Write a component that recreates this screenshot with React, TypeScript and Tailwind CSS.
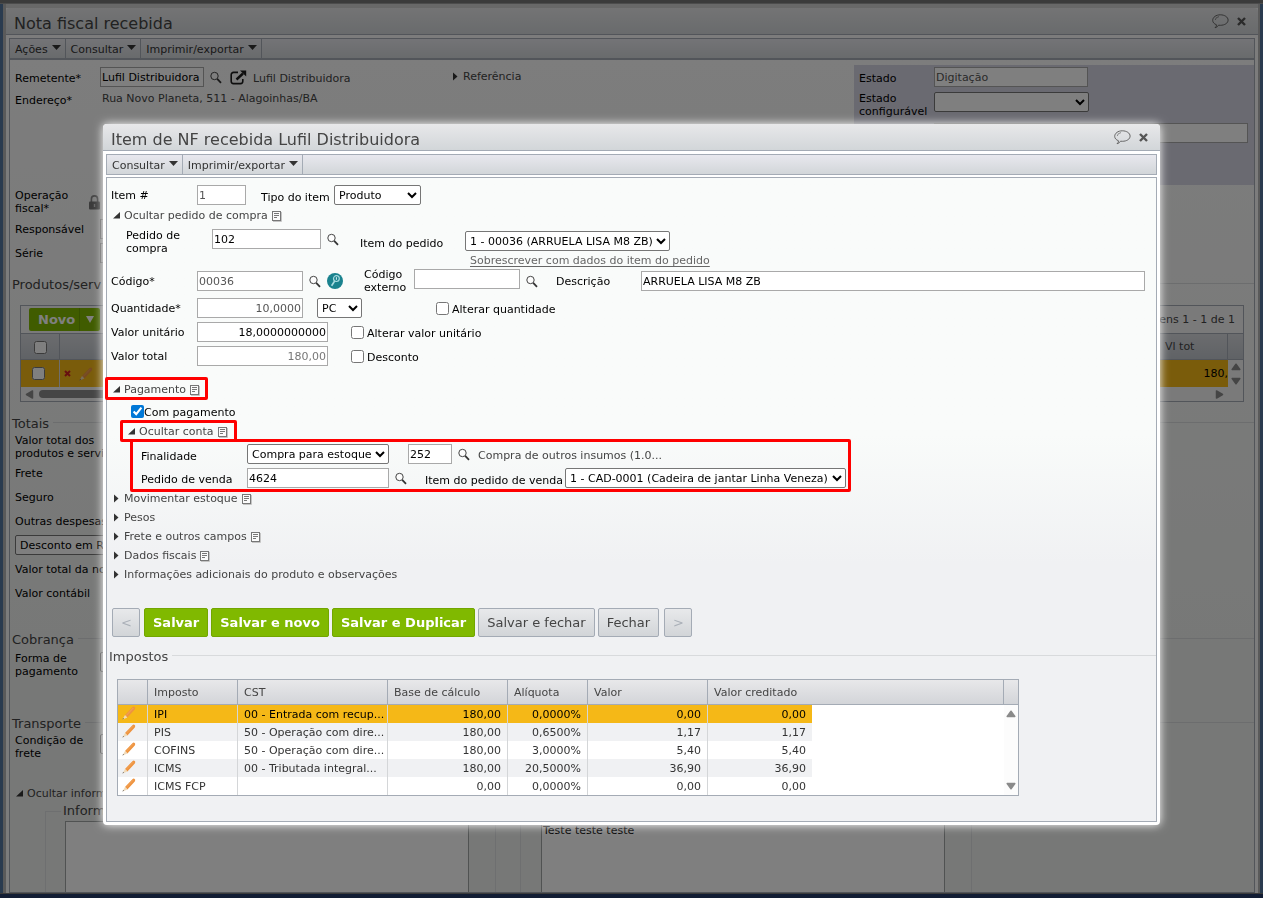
import type { ReactNode } from "react";

const inputBase = "h-5 border border-[#a9a9a9] bg-white px-px text-[11px]";
const selectBase = "h-5 rounded-xs border border-[#767676] bg-white px-0 text-[11px] text-black";

function SearchIcon() {
  return (
    <svg width="12" height="13" viewBox="0 0 12 13" fill="none">
      <circle cx="4.5" cy="5" r="3.7" fill="#fdfdfd" stroke="#444" />
      <path d="M7.200 7.800l3.800 4" stroke="#333" strokeWidth="1.8" />
    </svg>
  );
}

function SearchButton({ label }: { label: string }) {
  return (
    <button type="button" aria-label={label} className="ml-1.5 shrink-0">
      <SearchIcon />
    </button>
  );
}

function NoteIcon() {
  return (
    <svg width="10" height="11" viewBox="0 0 10 11" fill="none" className="mt-0.5 ml-1 shrink-0">
      <rect x="0.5" y="0.5" width="8" height="9" fill="#fbfbfb" stroke="#777" />
      <path d="M2 2.5h5M2 4.5h5M2 6.5h3" stroke="#777" />
      <path d="M9.5 1v9.5H1" stroke="#c4c4c4" />
    </svg>
  );
}

function PencilIcon() {
  return (
    <svg width="14" height="14" viewBox="0 0 14 14">
      <path d="M3 9L10.4 1.200q1.200-1.100 2.300-.2t.1 2.400L5.400 11.400z" fill="#ee9440" />
      <path d="M4 9.700L11.300 2" stroke="#f5ab63" strokeWidth="0.700" />
      <path d="M3 9L5.400 11.400L.5 13.500z" fill="#f0dab8" />
      <path d="M1.200 12L2 12.800L.4 13.600z" fill="#555" />
    </svg>
  );
}

function LockIcon() {
  return (
    <svg width="11" height="15" viewBox="0 0 11 15">
      <path d="M2.4 7V4a3.1 3.1 0 016.2 0v3" fill="none" stroke="#8a8a8a" strokeWidth="1.6" />
      <rect y="6.5" width="11" height="8" rx="1" fill="#777" />
      <path d="M5.5 9v3" stroke="#ccc" strokeWidth="1.4" />
    </svg>
  );
}

function OpenIcon() {
  return (
    <svg width="17" height="15" viewBox="0 0 17 15" fill="none" stroke="#1c1c1c">
      <path
        d="M8 2.4H3.5a2.3 2.3 0 00-2.3 2.3v6.6a2.3 2.3 0 002.3 2.3h7a2.3 2.3 0 002.3-2.3V9"
        strokeWidth="1.6"
      />
      <path d="M6.5 9.5L13 3.5" strokeWidth="2.4" />
      <path d="M10 .5h6.2v6z" fill="#1c1c1c" stroke="none" />
    </svg>
  );
}

function WindowButtons() {
  return (
    <div className="flex items-center gap-2">
      <button type="button" aria-label="Comentários">
        <svg width="17" height="15" viewBox="0 0 17 15" fill="none" stroke="#666">
          <path d="M4.5 10.8C2 9.800.7 8.300.7 6.300.7 3.300 4 .8 8.300.8s7.800 2.300 7.800 5.300-3.400 5.200-7.800 5.200l-1.800-.1Q5.700 13 3 13.800q1.600-1.400 1.500-3z" />
          <path d="M3.200 6Q3.500 3.200 7 2.600" strokeWidth="0.700" />
        </svg>
      </button>
      <button type="button" aria-label="Fechar janela">
        <svg width="9" height="9" viewBox="0 0 9 9" stroke="#555" strokeWidth="2.4">
          <path d="M1 1l7 7M8 1L1 8" />
        </svg>
      </button>
    </div>
  );
}

function TitleBar({ title }: { title: string }) {
  return (
    <div className="flex h-[27px] items-center justify-between rounded-t border-b border-[#a4abb5] bg-linear-to-b from-[#e8e8ea] to-[#d2d6d9] pr-3 pl-2">
      <h1 className="pt-1.5 text-base leading-5 text-[#444]">{title}</h1>
      <WindowButtons />
    </div>
  );
}

function MenuBar({ items }: { items: string[] }) {
  return (
    <div className="mx-[3px] mt-[3px] flex h-[21px] border border-[#a4abb5] bg-linear-to-b from-[#e8e8ee] to-[#d2d6d9]">
      {items.map((item) => (
        <button
          key={item}
          type="button"
          className="flex items-center gap-1 border-r border-[#a4abb5] pt-px pr-1 pl-[5px] text-[#333]"
        >
          {item}
          <svg width="9" height="5" viewBox="0 0 9 5" className="mb-1">
            <path d="M0 0h9L4.5 5z" fill="#333" />
          </svg>
        </button>
      ))}
    </div>
  );
}

function Toggle({
  children,
  open = false,
  note = false,
}: {
  children: ReactNode;
  open?: boolean;
  note?: boolean;
}) {
  return (
    <button type="button" aria-expanded={open} className="flex h-full items-center text-[#444]">
      <svg width="7" height="9" viewBox="0 0 7 9" className="mr-1 shrink-0">
        <path d={open ? "M7 1v6.500H0z" : "M1 .5L5.500 4.500L1 8.500z"} fill="#333" />
      </svg>
      {children}
      {note && <NoteIcon />}
    </button>
  );
}

function CheckLabel({ children, className }: { children: ReactNode; className: string }) {
  return (
    <label className={`flex items-center gap-[3px] ${className}`}>
      <input type="checkbox" className="size-[13px]" />
      <span className="pt-0.5">{children}</span>
    </label>
  );
}

function GroupTitle({ children }: { children: ReactNode }) {
  return (
    <div className="flex h-5 items-center gap-1 pl-0.5">
      <h2 className="text-[13px] leading-4 text-[#444]">{children}</h2>
      <div className="mb-1 h-px flex-1 bg-[#d8dadc]" />
    </div>
  );
}

function Highlight({ className }: { className: string }) {
  return (
    <div
      className={`pointer-events-none absolute z-10 rounded-xs border-3 border-[#ff0000] ${className}`}
    />
  );
}

function Arrow({ d }: { d: string }) {
  return (
    <svg width="10" height="9" viewBox="0 0 10 9">
      <path d={d} fill="#8a8a8a" stroke="#8a8a8a" strokeWidth="1.500" strokeLinejoin="round" />
    </svg>
  );
}

const up = "M5 2.200L8.800 7.500H1.200z";
const down = "M5 6.800L8.800 1.500H1.200z";
const left = "M1.500 4.500L7.500 1v7z";
const right = "M7.500 4.500L1.500 1v7z";

function InvoicePage() {
  return (
    <div className="flex h-screen flex-col overflow-hidden bg-[#f8f8f8]">
      <div className="h-[3px] shrink-0 bg-[#777]" />
      <div className="h-px shrink-0 bg-[#999]" />
      <div className="flex min-h-0 flex-1">
        <div className="w-[3px] bg-[#54779f]" />
        <div className="w-[3px] bg-[#b5b5b5]" />
        <main className="flex min-w-0 flex-1 flex-col border-t-4 border-[#d0d0d0]">
          <TitleBar title="Nota fiscal recebida" />
          <MenuBar items={["Ações", "Consultar", "Imprimir/exportar"]} />
          <div className="mx-[3px] min-h-0 flex-1 overflow-hidden border border-[#a4abb5] bg-linear-to-b from-[#fafafa] to-[#eff1ef] to-70%">
            <div className="flex pt-[5px]">
              <div className="w-[438px] pt-0.5 pl-[5px]">
                <div className="flex h-5 items-center">
                  <label htmlFor="remetente" className="w-[85px] pt-[3px]">
                    Remetente*
                  </label>
                  <input
                    id="remetente"
                    className={`${inputBase} w-[104px]`}
                    defaultValue="Lufil Distribuidora"
                  />
                  <SearchButton label="Buscar remetente" />
                  <button type="button" aria-label="Abrir remetente" className="ml-2">
                    <OpenIcon />
                  </button>
                  <span className="ml-1.5 pt-[3px] text-[#444]">Lufil Distribuidora</span>
                </div>
                <div className="flex h-6 items-center">
                  <span className="w-[87px] pt-0.5">Endereço*</span>
                  <span className="pb-0.5 text-[#444]">Rua Novo Planeta, 511 - Alagoinhas/BA</span>
                </div>
              </div>
              <div className="h-[22px] pl-1">
                <Toggle>Referência</Toggle>
              </div>
              <div className="ml-auto h-[120px] w-[400px] shrink-0 bg-[#d4d4e2] pt-0.5 pl-[5px]">
                <div className="flex h-5 items-center">
                  <label htmlFor="estado" className="w-[75px] pt-[3px]">
                    Estado
                  </label>
                  <input
                    id="estado"
                    className={`${inputBase} w-[154px] text-[#555]`}
                    defaultValue="Digitação"
                  />
                </div>
                <div className="mt-1 flex h-[26px] items-center">
                  <label htmlFor="estado-conf" className="w-[75px] pt-0.5">
                    Estado configurável
                  </label>
                  <select id="estado-conf" className={`${selectBase} mb-1 w-[155px]`} />
                </div>
                <div className="mt-1.5 flex pr-1.5 pl-[75px]">
                  <input aria-label="Situação" className={`${inputBase} min-w-0 flex-1`} />
                </div>
              </div>
            </div>

            <div className="mt-1 pl-[5px]">
              <div className="flex h-[26px] items-center">
                <span className="w-[74px]">Operação fiscal*</span>
                <LockIcon />
              </div>
              <div className="mt-0.5 flex h-6 items-center">
                <label htmlFor="responsavel" className="w-[85px]">
                  Responsável
                </label>
                <input id="responsavel" className={`${inputBase} w-40`} />
              </div>
              <div className="flex h-6 items-center">
                <label htmlFor="serie" className="w-[85px]">
                  Série
                </label>
                <input id="serie" className={`${inputBase} w-40`} />
              </div>
            </div>

            <div className="mt-2.5">
              <GroupTitle>Produtos/serv</GroupTitle>
            </div>
            <div className="mx-2.5 mt-2.5 border border-[#a4abb5] bg-[#f4f4f4]">
              <div className="flex h-[27px] items-center justify-between px-2">
                <button
                  type="button"
                  className="flex h-[23px] items-center rounded-xs bg-[#80b900] text-[13px] font-bold text-white"
                >
                  <span className="pr-1 pl-[9px]">Novo</span>
                  <span className="flex h-full items-center border-l border-[#6fa000] px-1.5">
                    <svg width="8" height="7" viewBox="0 0 8 7">
                      <path d="M0 0h8L4 7z" fill="#fff" />
                    </svg>
                  </span>
                </button>
                <span className="text-[#444]">Itens 1 - 1 de 1</span>
              </div>
              <table className="w-full table-fixed border-separate border-spacing-0">
                <colgroup>
                  <col className="w-[39px]" />
                  <col />
                  <col className="w-[69px]" />
                  <col className="w-[15px]" />
                </colgroup>
                <thead>
                  <tr className="h-[27px] bg-linear-to-b from-[#d8dade] to-[#bfc4cb]">
                    <th className="border-y border-r border-[#a4abb5] pt-1">
                      <input type="checkbox" aria-label="Selecionar todos" />
                    </th>
                    <th className="border-y border-[#a4abb5]" />
                    <th className="border-y border-r border-[#a4abb5] px-1.5 text-left font-normal text-[#444]">
                      Vl tot
                    </th>
                    <th className="border-y border-[#a4abb5]" />
                  </tr>
                </thead>
                <tbody>
                  <tr className="h-[27px]">
                    <td className="border-r border-[#ddd] bg-[#f5b817] pt-0.5 pr-1 text-center">
                      <input type="checkbox" aria-label="Selecionar item" />
                    </td>
                    <td className="bg-[#f5b817]">
                      <div className="flex items-center gap-2 pl-1">
                        <svg width="7" height="7" viewBox="0 0 7 7" stroke="#d02020" strokeWidth="2">
                          <path d="M1 1l5 5M6 1L1 6" />
                        </svg>
                        <PencilIcon />
                      </div>
                    </td>
                    <td className="bg-[#f5b817] text-right">180,</td>
                    <td>
                      <div className="flex flex-col items-center gap-1.5">
                        <Arrow d={up} />
                        <Arrow d={down} />
                      </div>
                    </td>
                  </tr>
                </tbody>
              </table>
              <div className="flex h-[14px] items-center pr-[18px] pl-1">
                <Arrow d={left} />
                <div className="mx-1 h-2 w-96 rounded bg-[#8a8a8a]" />
                <span className="ml-auto">
                  <Arrow d={right} />
                </span>
              </div>
            </div>

            <div className="mt-3">
              <GroupTitle>Totais</GroupTitle>
            </div>
            <div className="pl-[5px]">
              <div className="h-[27px] w-28">Valor total dos produtos e serviços</div>
              <div className="flex h-6 items-center">Frete</div>
              <div className="flex h-6 items-center">Seguro</div>
              <div className="flex h-6 items-center">Outras despesas</div>
              <div className="flex h-6 items-center">
                <select aria-label="Tipo de desconto" className={`${selectBase} w-32`}>
                  <option>Desconto em R$</option>
                </select>
              </div>
              <div className="flex h-6 items-center">Valor total da nota</div>
              <div className="flex h-6 items-center">Valor contábil</div>
            </div>
            <div className="mt-[25px]">
              <GroupTitle>Cobrança</GroupTitle>
            </div>
            <div className="mt-0.5 flex items-start pl-[5px]">
              <label htmlFor="forma" className="w-[85px] pr-4">
                Forma de pagamento
              </label>
              <select id="forma" className={`${selectBase} w-40`} />
            </div>
            <div className="mt-9">
              <GroupTitle>Transporte</GroupTitle>
            </div>
            <div className="flex items-start pl-[5px]">
              <label htmlFor="condicao" className="w-[85px] pr-4">
                Condição de frete
              </label>
              <select id="condicao" className={`${selectBase} w-40`} />
            </div>
            <div className="mt-[23px] h-5 pl-1.5">
              <Toggle open>Ocultar informações</Toggle>
            </div>
            <div className="flex gap-6 pl-[35px]">
              <fieldset className="w-[451px] border border-[#dcdee0] px-[19px]">
                <legend className="-ml-1 px-0.5 text-[13px] leading-4 text-[#444]">
                  Informações
                </legend>
                <textarea
                  aria-label="Informações"
                  className="mt-0.5 h-40 w-[404px] resize-none border border-[#a0a5a5] bg-white"
                />
              </fieldset>
              <fieldset className="w-[452px] border border-[#dcdee0] px-5">
                <legend className="text-[13px] leading-4 text-[#444]">Observações</legend>
                <textarea
                  aria-label="Observações"
                  className="mt-0.5 h-40 w-[404px] resize-none border border-[#a0a5a5] bg-white px-px py-0.5"
                  defaultValue="Teste teste teste"
                />
              </fieldset>
            </div>
          </div>
        </main>
        <div className="w-[2px] bg-[#b5b5b5]" />
        <div className="w-[3px] bg-[#54779f]" />
      </div>
      <div className="h-[5px] shrink-0 border-t border-[#777] bg-[#243a68]" />
    </div>
  );
}

const taxes = [
  ["IPI", "00 - Entrada com recup...", "180,00", "0,0000%", "0,00", "0,00"],
  ["PIS", "50 - Operação com dire...", "180,00", "0,6500%", "1,17", "1,17"],
  ["COFINS", "50 - Operação com dire...", "180,00", "3,0000%", "5,40", "5,40"],
  ["ICMS", "00 - Tributada integral...", "180,00", "20,5000%", "36,90", "36,90"],
  ["ICMS FCP", "", "0,00", "0,0000%", "0,00", "0,00"],
];

function rowColor(i: number) {
  if (i === 0) return "bg-[#f5b817] text-black";
  return i % 2 ? "bg-[#f0f1f3] text-[#333]" : "bg-white text-[#333]";
}

function TaxTable() {
  const th = "border-r border-b border-[#a4abb5] px-1.5 text-left font-normal text-[#444]";
  return (
    <div className="mt-3 ml-2.5 w-[902px] border border-[#a4abb5] bg-white">
      <table className="w-full table-fixed border-separate border-spacing-0">
        <colgroup>
          <col className="w-[30px]" />
          <col className="w-[90px]" />
          <col className="w-[150px]" />
          <col className="w-[120px]" />
          <col className="w-[80px]" />
          <col className="w-[120px]" />
          <col className="w-[104px]" />
          <col />
          <col className="w-[14px]" />
        </colgroup>
        <thead>
          <tr className="h-[25px] bg-linear-to-b from-[#e8e8ea] to-[#d2d4d8]">
            <th className={th} />
            <th className={th}>Imposto</th>
            <th className={th}>CST</th>
            <th className={th}>Base de cálculo</th>
            <th className={th}>Alíquota</th>
            <th className={th}>Valor</th>
            <th className={th} colSpan={2}>
              Valor creditado
            </th>
            <th className="border-b border-[#a4abb5]" />
          </tr>
        </thead>
        <tbody>
          {taxes.map((tax, i) => (
            <tr key={tax[0]} className="h-[18px]">
              <td className={`border-r border-[#d4d6d8] ${rowColor(i)}`}>
                <button
                  type="button"
                  aria-label={`Editar ${tax[0]}`}
                  className="flex h-[18px] items-start pt-px pl-1"
                >
                  <PencilIcon />
                </button>
              </td>
              {tax.map((cell, j) => (
                <td
                  key={j}
                  className={`pl-1.5 whitespace-nowrap ${j > 1 ? "pr-1.5 text-right" : ""} ${j < 5 ? "border-r border-[#d4d6d8]" : ""} ${rowColor(i)}`}
                >
                  {cell}
                </td>
              ))}
              <td />
              {i === 0 && (
                <td rowSpan={5} className="bg-[#fcfcfc]">
                  <div className="flex h-[90px] flex-col items-center justify-between py-1">
                    <Arrow d={up} />
                    <Arrow d={down} />
                  </div>
                </td>
              )}
            </tr>
          ))}
        </tbody>
      </table>
    </div>
  );
}

function ItemDialog() {
  const green =
    "h-[29px] rounded-xs border border-[#72a600] bg-[#80b900] px-2 text-[13px] font-bold text-white";
  const gray =
    "h-[29px] rounded-xs border border-[#a4abb5] bg-linear-to-b from-[#e8e9eb] to-[#d2d5d8] px-2 text-[13px]";
  return (
    <div
      role="dialog"
      aria-label="Item de NF recebida Lufil Distribuidora"
      className="mx-[103px] mt-[124px] rounded bg-white pb-[3px] shadow-[0_0_10px_#fff]"
    >
      <TitleBar title="Item de NF recebida Lufil Distribuidora" />
      <MenuBar items={["Consultar", "Imprimir/exportar"]} />
      <div className="mx-[3px] mt-0.5 border border-[#a4abb5] bg-linear-to-b from-[#f9fbfa] from-40% to-[#f0f1f3] to-60% pt-[7px] pb-[25px]">
        <div className="pl-1">
          <div className="flex h-5 items-center">
            <label htmlFor="item" className="w-[86px] pt-px">
              Item #
            </label>
            <input id="item" className={`${inputBase} w-[49px] text-[#555]`} defaultValue="1" />
            <label htmlFor="tipo" className="w-[73px] pt-1 pl-[15px] whitespace-nowrap">
              Tipo do item
            </label>
            <select id="tipo" className={`${selectBase} ml-[15px] w-[87px]`}>
              <option>Produto</option>
            </select>
          </div>
          <div className="h-5 pl-0.5">
            <Toggle open note>
              Ocultar pedido de compra
            </Toggle>
          </div>
          <div className="mt-1 flex h-10 items-start">
            <label htmlFor="pedido" className="ml-[15px] w-[86px] pr-4">
              Pedido de compra
            </label>
            <div className="flex items-center">
              <input id="pedido" className={`${inputBase} w-[109px]`} defaultValue="102" />
              <SearchButton label="Buscar pedido de compra" />
            </div>
            <label htmlFor="item-pedido" className="ml-[21px] w-[105px] pt-2">
              Item do pedido
            </label>
            <div className="pt-0.5">
              <select id="item-pedido" className={`${selectBase} block w-[205px]`}>
                <option>1 - 00036 (ARRUELA LISA M8 ZB)</option>
              </select>
              <a
                href="#"
                className="ml-[5px] block leading-[19px] text-[#666] underline underline-offset-2"
              >
                Sobrescrever com dados do item do pedido
              </a>
            </div>
          </div>
          <div className="flex h-6 items-center pr-[11px]">
            <label htmlFor="codigo" className="w-[86px] pt-px">
              Código*
            </label>
            <input
              id="codigo"
              className={`${inputBase} w-[106px] text-[#555]`}
              defaultValue="00036"
            />
            <SearchButton label="Buscar código" />
            <button type="button" aria-label="Pesquisa avançada" className="ml-1.5">
              <svg width="16" height="16" viewBox="0 0 16 16" fill="none">
                <circle cx="8" cy="8" r="8" fill="#1a828e" />
                <circle cx="9.400" cy="5.600" r="2.900" stroke="#a8dbe0" strokeWidth="1.200" />
                <path d="M7.700 8L4.600 12.800" stroke="#a8dbe0" strokeWidth="1.600" />
                <path d="M9.400 4.200v2.600" stroke="#d8f2f4" />
              </svg>
            </button>
            <label htmlFor="externo" className="ml-[21px] w-[50px]">
              Código externo
            </label>
            <input id="externo" className={`${inputBase} w-[106px] self-start`} />
            <SearchButton label="Buscar código externo" />
            <label htmlFor="descricao" className="ml-[18px] w-[85px] pt-px">
              Descrição
            </label>
            <input
              id="descricao"
              className={`${inputBase} min-w-0 flex-1`}
              defaultValue="ARRUELA LISA M8 ZB"
            />
          </div>
          <div className="mt-[5px] flex h-5 items-center">
            <label htmlFor="quantidade" className="w-[86px]">
              Quantidade*
            </label>
            <input
              id="quantidade"
              className={`${inputBase} w-[106px] text-right text-[#555]`}
              defaultValue="10,0000"
            />
            <select aria-label="Unidade" className={`${selectBase} ml-3.5 w-[45px]`}>
              <option>PC</option>
            </select>
            <CheckLabel className="ml-[74px]">Alterar quantidade</CheckLabel>
          </div>
          <div className="mt-1 flex h-5 items-center">
            <label htmlFor="unitario" className="w-[86px]">
              Valor unitário
            </label>
            <input
              id="unitario"
              className={`${inputBase} w-[131px] text-right`}
              defaultValue="18,0000000000"
            />
            <CheckLabel className="ml-[23px]">Alterar valor unitário</CheckLabel>
          </div>
          <div className="mt-1 flex h-5 items-center">
            <label htmlFor="total" className="w-[86px]">
              Valor total
            </label>
            <input
              id="total"
              className={`${inputBase} w-[131px] text-right text-[#777]`}
              defaultValue="180,00"
            />
            <CheckLabel className="ml-[23px]">Desconto</CheckLabel>
          </div>

          <div className="relative mt-[13px] h-5 pl-0.5">
            <Highlight className="-top-0.5 -left-1.5 h-[23px] w-[103px]" />
            <Toggle open note>
              Pagamento
            </Toggle>
          </div>
          <label className="mt-0.5 ml-5 flex h-5 items-center">
            <input type="checkbox" defaultChecked className="size-[13px] accent-[#0078d7]" />
            <span className="pt-[3px]">Com pagamento</span>
          </label>
          <div className="relative h-5 pl-[17px]">
            <Highlight className="-top-px left-[9px] h-[22px] w-[117px]" />
            <Toggle open note>
              Ocultar conta
            </Toggle>
          </div>
          <div className="relative mt-[3px] pl-[30px]">
            <Highlight className="-top-[5px] left-[19px] h-[53px] w-[721px]" />
            <div className="flex h-5 items-center">
              <label htmlFor="finalidade" className="w-[106px] pt-1">
                Finalidade
              </label>
              <select id="finalidade" className={`${selectBase} w-[142px]`}>
                <option>Compra para estoque</option>
              </select>
              <input
                aria-label="Conta"
                className={`${inputBase} ml-[19px] w-11`}
                defaultValue="252"
              />
              <SearchButton label="Buscar conta" />
              <span className="ml-2 pt-0.5 text-[#444]">Compra de outros insumos (1.0...</span>
            </div>
            <div className="mt-1 flex h-5 items-center">
              <label htmlFor="pedido-venda" className="w-[106px] pt-0.5">
                Pedido de venda
              </label>
              <input
                id="pedido-venda"
                className={`${inputBase} w-[142px]`}
                defaultValue="4624"
              />
              <SearchButton label="Buscar pedido de venda" />
              <label htmlFor="item-venda" className="ml-[18px] w-[140px] pt-1 whitespace-nowrap">
                Item do pedido de venda
              </label>
              <select id="item-venda" className={`${selectBase} w-[281px]`}>
                <option>1 - CAD-0001 (Cadeira de jantar Linha Veneza)</option>
              </select>
            </div>
          </div>
          <ul className="mt-px pl-0.5">
            <li className="h-[19px]">
              <Toggle note>Movimentar estoque</Toggle>
            </li>
            <li className="h-[19px]">
              <Toggle>Pesos</Toggle>
            </li>
            <li className="h-[19px]">
              <Toggle note>Frete e outros campos</Toggle>
            </li>
            <li className="h-[19px]">
              <Toggle note>Dados fiscais</Toggle>
            </li>
            <li className="h-[19px]">
              <Toggle>Informações adicionais do produto e observações</Toggle>
            </li>
          </ul>
        </div>

        <div className="mt-6 flex gap-[3px] pl-[5px]">
          <button type="button" className={`${gray} mr-px w-7 text-[#aab0b8]`}>
            &lt;
          </button>
          <button type="button" className={green}>
            Salvar
          </button>
          <button type="button" className={green}>
            Salvar e novo
          </button>
          <button type="button" className={green}>
            Salvar e Duplicar
          </button>
          <button type="button" className={`${gray} text-[#444]`}>
            Salvar e fechar
          </button>
          <button type="button" className={`${gray} text-[#444]`}>
            Fechar
          </button>
          <button type="button" className={`${gray} ml-0.5 w-7 text-[#aab0b8]`}>
            &gt;
          </button>
        </div>

        <div className="mt-2.5">
          <GroupTitle>Impostos</GroupTitle>
        </div>
        <TaxTable />
      </div>
    </div>
  );
}

export default function App() {
  return (
    <div className="font-['DejaVu_Sans',Verdana,sans-serif] text-[11px] leading-[13px] text-black">
      <InvoicePage />
      <div className="fixed inset-0 overflow-hidden bg-black/50">
        <ItemDialog />
      </div>
    </div>
  );
}
